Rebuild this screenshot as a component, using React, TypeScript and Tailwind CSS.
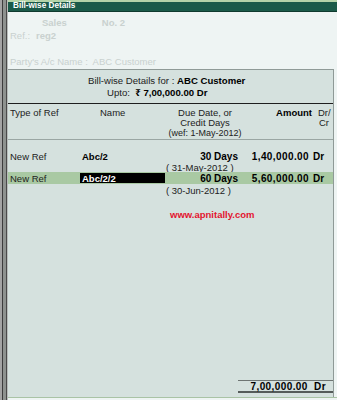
import React from "react";

const F = { fontFamily: '"Liberation Sans", "Noto Sans", Arial, sans-serif' };

export default function App() {
  return (
    <div style={F} className="w-[337px] h-[400px] flex bg-[#eef4f3] text-[#222] overflow-hidden">
      {/* left strip */}
      <div className="w-[8px] h-full flex shrink-0">
        <div className="w-[2px] bg-[#a4a4a4]" />
        <div className="w-[1px] bg-[#3c3c3c]" />
        <div className="w-[3px] bg-[#8e928f]" />
        <div className="w-[1px] bg-[#4a4a4a]" />
        <div className="w-[1px] bg-[#b8bcba]" />
      </div>
      <div className="flex-1 flex flex-col min-w-0">
        <div className="h-[2px] bg-[#b5d3a9]" />
        <div className="h-[10px] bg-[#1b5a49] flex items-center pl-[5px] border-b border-[#0f3a2e]">
          <span className="text-white font-bold text-[8.2px] leading-none">Bill-wise Details</span>
        </div>
        {/* faded upper area */}
        <div className="h-[57px] relative text-[#c9d1cf] text-[9.5px] leading-none">
          <div className="flex pt-[6px]">
            <span className="ml-[34px] font-bold">Sales</span>
            <span className="ml-[35px] font-bold">No. 2</span>
          </div>
          <div className="flex mt-[3px] pl-[2px]">
            <span>Ref.:</span>
            <span className="ml-[6px] font-bold">reg2</span>
          </div>
          <div className="flex mt-[17px] pl-[2px]">
            <span>Party's A/c Name&nbsp;:&nbsp; ABC Customer</span>
          </div>
        </div>
        {/* panel */}
        <div className="flex-1 flex flex-col mr-[3px] bg-[#d5e1de] border-t border-r border-[#8f9a97] relative">
          {/* header */}
          <div className="h-[33px] flex flex-col text-[9.6px] leading-[11px] pt-[5px]">
            <div className="pl-[80px] whitespace-nowrap">
              Bill-wise Details for : <span className="font-bold text-black">ABC Customer</span>
            </div>
            <div className="pl-[99px] whitespace-nowrap mt-[1px]">
              Upto: <span className="font-bold text-black">&nbsp;₹ 7,00,000.00 Dr</span>
            </div>
          </div>
          <div className="h-[1px] bg-[#1e1e1e]" />
          {/* column header */}
          <div className="flex text-[9.5px] leading-[10px] pt-[4px] h-[36px] border-b border-[#9aa6a3]">
            <div className="w-[72px] pl-[2px]">Type of Ref</div>
            <div className="w-[85px] pl-[20px]">Name</div>
            <div className="w-[80px] flex flex-col items-center">
              <span>Due Date, or</span>
              <span>Credit Days</span>
              <span className="text-[9px]">(wef: 1-May-2012)</span>
            </div>
            <div className="w-[67px] text-right font-bold text-black">Amount</div>
            <div className="w-[21px] pl-[6px] flex flex-col">
              <span>Dr/</span>
              <span className="pl-[1px]">Cr</span>
            </div>
          </div>
          {/* rows */}
          <div className="flex flex-col text-[9.5px] leading-[11px] pt-[11px]">
            <div className="flex h-[11px] items-center">
              <div className="w-[72px] pl-[2px]">New Ref</div>
              <div className="w-[85px] pl-[2px] font-bold text-black">Abc/2</div>
              <div className="w-[73px] text-right font-bold text-black text-[10px]">30 Days</div>
              <div className="w-[71px] text-right font-bold text-black text-[10px] tracking-[0.4px]">1,40,000.00</div>
              <div className="pl-[4px] font-bold text-black text-[10px]">Dr</div>
            </div>
            <div className="flex h-[11px] items-center">
              <div className="w-[158px]" />
              <div className="text-[9.5px]">( 31-May-2012 )</div>
            </div>
            <div className="flex h-[12px] items-center bg-[#a9c9a3] mt-[-1px]">
              <div className="w-[72px] pl-[2px]">New Ref</div>
              <div className="w-[85px] h-[10px] bg-black text-white font-bold pl-[2px] flex items-center">Abc/2/2</div>
              <div className="w-[73px] text-right font-bold text-black text-[10px]">60 Days</div>
              <div className="w-[71px] text-right font-bold text-black text-[10px] tracking-[0.4px]">5,60,000.00</div>
              <div className="pl-[4px] font-bold text-black text-[10px]">Dr</div>
            </div>
            <div className="flex h-[12px] items-center">
              <div className="w-[158px]" />
              <div>( 30-Jun-2012 )</div>
            </div>
          </div>
          <div className="pl-[162px] pt-[13px] text-[9.5px] font-bold text-[#e3142e] leading-[11px]">
            www.apnitally.com
          </div>
          <div className="flex-1" />
          {/* total */}
          <div className="flex justify-end mb-[4px]">
            <div className="w-[95px] border-t border-[#6e7573] border-b-2 border-b-[#555c5a] h-[13px] flex items-center justify-end pr-[7px] text-[10px] font-bold text-black tracking-[0.4px]">
              7,00,000.00&nbsp; Dr
            </div>
          </div>
        </div>
        <div className="h-[3px] bg-[#eef4f3] border-t border-[#a9c3a5]" />
      </div>
    </div>
  );
}
